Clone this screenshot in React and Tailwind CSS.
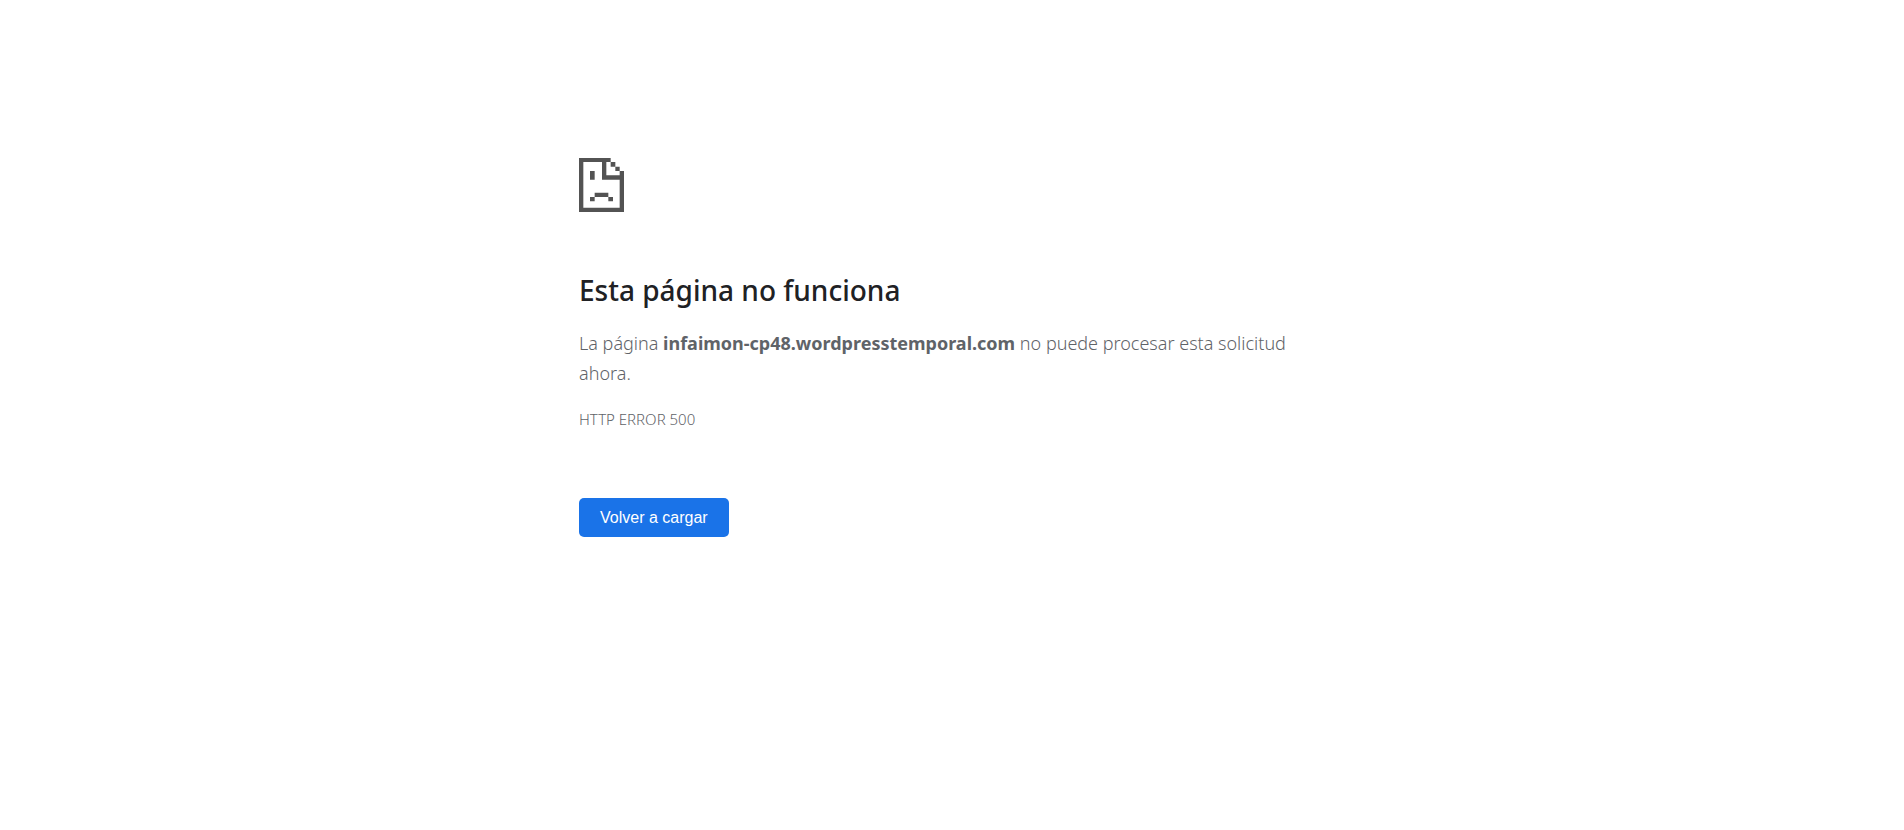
function SadPageIcon() {
  return (
    <svg
      viewBox="0 0 135 162"
      className="h-[54px] w-[45px] fill-[#535353]"
      aria-hidden="true"
    >
      {/* Sheet outline and folded corner */}
      <path
        d="M0 0h95v12H82v40h40V39h13v123H0zM13 12v137h109V65H69V12z"
        fillRule="evenodd"
      />
      <path d="M95 12h14v14H95zM109 26h13v13h-13z" />
      {/* Face */}
      <path d="M33 39h14v26H33zM47 104h41v13H47zM33 117h14v13H33zM88 117h14v13H88z" />
    </svg>
  );
}

export default function App() {
  return (
    <main className="mx-auto max-w-[746px] pt-[158px] font-['Noto_Sans',sans-serif] text-[#5f6368]">
      <SadPageIcon />

      <h1 className="mt-[58px] text-[28px] leading-10 font-medium text-[#202124]">
        Esta página no funciona
      </h1>

      <p className="mt-[18px] text-[18px] leading-[30px] font-light">
        La página <strong className="font-bold">infaimon-cp48.wordpresstemporal.com</strong> no
        puede procesar esta solicitud ahora.
      </p>

      <p className="mt-4 text-[15px] leading-[30px] font-light">HTTP ERROR 500</p>

      <button
        type="button"
        onClick={() => window.location.reload()}
        className="mt-16 h-[39px] rounded-[5px] bg-[#1a73e8] px-[21px] font-['Liberation_Sans',Arial,sans-serif] text-base text-white"
      >
        Volver a cargar
      </button>
    </main>
  );
}
